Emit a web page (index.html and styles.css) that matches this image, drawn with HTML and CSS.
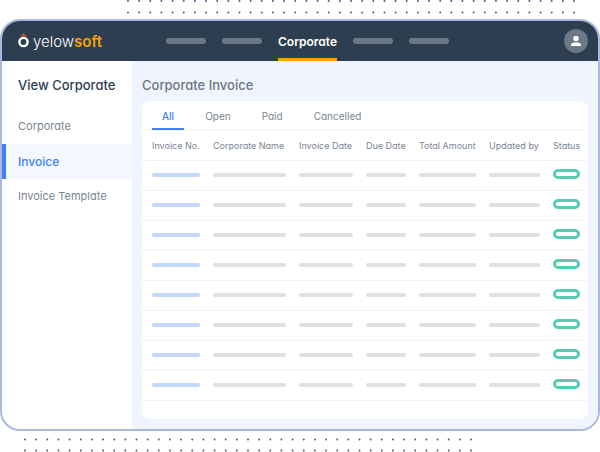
FILE: index.html
```html
<!DOCTYPE html>
<html lang="en">
<head>
    <meta charset="UTF-8">
    <meta name="viewport" content="width=device-width, initial-scale=1.0">
    <title>Corporate Invoice</title>
    <link rel="stylesheet" href="styles.css">
</head>
<body>
    <!-- Dotted decoration above the window -->
    <svg class="dots dots-top" width="450" height="19" viewBox="0 0 450 19" aria-hidden="true">
        <path d="M2 1H448.5M2 12.4H448.5"/>
    </svg>
    <div class="window">
        <header class="topbar">
            <a class="brand" href="#">
                <svg class="brand-icon" width="11" height="16" viewBox="0 0 11 16" aria-hidden="true">
                    <path d="M2.8 3.6Q5.5 1.4 8.2 3.6" fill="none" stroke="#c9582f" stroke-width="1.4"/>
                    <circle cx="5.5" cy="1.6" r="1" fill="#c9582f"/>
                    <circle cx="5.5" cy="9" r="4.1" fill="none" stroke="#fff" stroke-width="2.4"/>
                </svg>
                <span>yelow<b>soft</b></span>
            </a>
            <nav class="topnav">
                <a href="#" aria-label="Dashboard"><span class="nav-bar"></span></a>
                <a href="#" aria-label="Bookings"><span class="nav-bar"></span></a>
                <a href="#" class="active">Corporate</a>
                <a href="#" aria-label="Reports"><span class="nav-bar"></span></a>
                <a href="#" aria-label="Settings"><span class="nav-bar"></span></a>
            </nav>
            <button class="avatar" type="button" aria-label="Account">
                <svg width="12" height="12" viewBox="0 0 12 12" aria-hidden="true">
                    <circle cx="6" cy="3.5" r="2.7"/>
                    <path d="M1 11V9.8C1 8 3.5 7.2 6 7.2S11 8 11 9.8V11Z"/>
                </svg>
            </button>
        </header>
        <div class="content">
            <aside class="sidebar">
                <h2>View Corporate</h2>
                <a href="#">Corporate</a>
                <a href="#" class="active">Invoice</a>
                <a href="#">Invoice Template</a>
            </aside>
            <main>
                <h1>Corporate Invoice</h1>
                <section class="card">
                    <div class="tabs">
                        <button class="tab active" type="button">All</button>
                        <button class="tab" type="button">Open</button>
                        <button class="tab" type="button">Paid</button>
                        <button class="tab" type="button">Cancelled</button>
                    </div>
                    <table>
                        <colgroup>
                            <col class="col-no">
                            <col class="col-name">
                            <col class="col-date">
                            <col class="col-due">
                            <col class="col-total">
                            <col class="col-updated">
                            <col class="col-status">
                        </colgroup>
                        <thead>
                            <tr>
                                <th>Invoice No.</th>
                                <th>Corporate Name</th>
                                <th>Invoice Date</th>
                                <th>Due Date</th>
                                <th>Total Amount</th>
                                <th>Updated by</th>
                                <th>Status</th>
                            </tr>
                        </thead>
                        <tbody id="invoice-rows"></tbody>
                    </table>
                </section>
            </main>
        </div>
    </div>
    <!-- Dotted decoration below the window -->
    <svg class="dots dots-bottom" width="450" height="21" viewBox="0 0 450 21" aria-hidden="true">
        <path d="M2 8.5H448.5M2 19.5H448.5"/>
    </svg>
    <script>
        // Fill the table with placeholder rows
        const rowCount = 8;
        const rows = document.getElementById('invoice-rows');
        for (let i = 0; i < rowCount; i++) {
            const row = document.createElement('tr');
            row.innerHTML = `
                <td><span class="bar bar-link"></span></td>
                ${'<td><span class="bar"></span></td>'.repeat(5)}
                <td><span class="pill"></span></td>
            `;
            rows.appendChild(row);
        }
    </script>
</body>
</html>
```

FILE: styles.css
```css
* {
    margin: 0;
    padding: 0;
    box-sizing: border-box;
}

body {
    font-family: Inter, "Liberation Sans", sans-serif;
    font-feature-settings: "cv11";
    font-size: 11px;
    color: #7a8491;
    background-color: #fff;
}

a {
    color: inherit;
    text-decoration: none;
}

button {
    font: inherit;
    font-feature-settings: inherit;
    color: inherit;
    background: none;
    border: none;
    cursor: pointer;
}

.dots {
    display: block;
    fill: none;
    stroke: #4d5c85;
    stroke-width: 2;
    stroke-linecap: round;
    stroke-dasharray: 0 11.15;
}

.dots-top {
    margin-left: 126px;
}

.dots-bottom {
    margin-left: 23px;
}

.window {
    border: 2px solid #a9b9e2;
    border-radius: 20px;
    overflow: hidden;
}

.topbar {
    display: flex;
    align-items: center;
    height: 40px;
    padding: 0 10px 0 16px;
    background-color: #2d3e50;
}

.brand {
    display: flex;
    align-items: center;
    gap: 4px;
    width: 148px;
    font-size: 15px;
    font-weight: 300;
    color: #fff;
}

.brand b {
    font-weight: 600;
    color: #f7a400;
}

.topnav {
    display: flex;
    gap: 16px;
    height: 100%;
    font-size: 12px;
    font-weight: 600;
    color: #fff;
}

.topnav a {
    display: flex;
    align-items: center;
}

.topnav .active {
    border-top: 3px solid transparent;
    border-bottom: 3px solid #f7a400;
}

.nav-bar {
    width: 40px;
    height: 6px;
    border-radius: 3px;
    background-color: #6c7885;
}

.avatar {
    display: flex;
    align-items: center;
    justify-content: center;
    width: 24px;
    height: 24px;
    margin-left: auto;
    border-radius: 50%;
    background-color: #6c7885;
    fill: #fff;
}

.content {
    display: flex;
}

.sidebar {
    width: 130px;
}

.sidebar h2 {
    padding-left: 16px;
    font-size: 13px;
    font-weight: 500;
    line-height: 48px;
    white-space: nowrap;
    color: #2d3e50;
}

.sidebar a {
    display: block;
    padding: 0 12px;
    border-left: 4px solid transparent;
    line-height: 35px;
}

.sidebar .active {
    border-left-color: #437ef7;
    background-color: #f4f8ff;
    font-size: 12px;
    font-weight: 500;
    color: #437ef7;
}

main {
    flex: 1;
    padding: 0 10px 10px;
    background-color: #f0f4ff;
}

h1 {
    font-size: 13px;
    font-weight: 500;
    line-height: 48px;
    height: 40px;
    color: #6b7684;
}

.card {
    padding-bottom: 18px;
    border-radius: 8px;
    background-color: #fff;
}

.tabs {
    display: flex;
    gap: 11px;
    height: 30px;
    padding: 0 10px;
    border-bottom: 1px solid #f2f3f5;
    font-size: 10px;
}

.tab {
    padding: 0 10px;
    border-top: 2px solid transparent;
    border-bottom: 2px solid transparent;
}

.tab.active {
    border-bottom-color: #437ef7;
    font-weight: 500;
    color: #437ef7;
}

table {
    width: 100%;
    table-layout: fixed;
    border-spacing: 0;
}

.col-no {
    width: 71px;
}

.col-name {
    width: 86px;
}

.col-date {
    width: 67px;
}

.col-due {
    width: 53px;
}

.col-total {
    width: 70px;
}

.col-updated {
    width: 64px;
}

.col-status {
    width: 35px;
}

th,
td {
    height: 30px;
    padding-right: 13px;
    border-bottom: 1px solid #f2f3f5;
    vertical-align: middle;
}

th {
    font-size: 9px;
    font-weight: 400;
    text-align: left;
    white-space: nowrap;
}

td {
    padding-bottom: 2px;
}

th:first-child,
td:first-child {
    padding-left: 10px;
}

th:last-child,
td:last-child {
    padding-right: 8px;
}

td:last-child {
    padding-bottom: 4px;
}

.bar {
    display: block;
    height: 4px;
    border-radius: 2px;
    background-color: #e0e0e0;
}

.bar-link {
    background-color: #c4d7fd;
}

.pill {
    display: block;
    height: 10px;
    border: 3px solid #58cbb2;
    border-radius: 5px;
}
```
